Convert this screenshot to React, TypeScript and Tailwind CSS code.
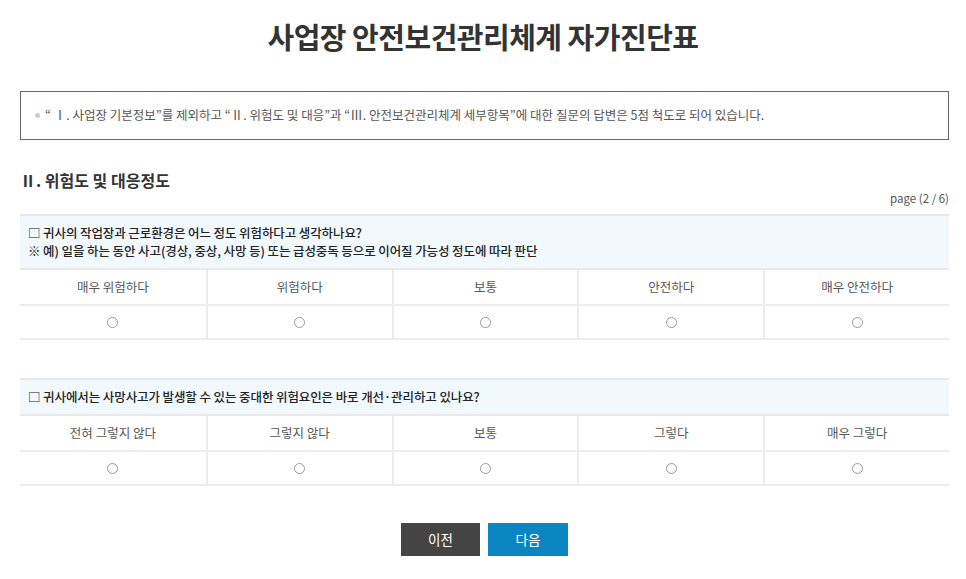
import React from "react";

const font = { fontFamily: '"Noto Sans CJK KR", "Noto Sans", sans-serif' };

type Question = {
  lines: string[];
  options: string[];
};

const questions: Question[] = [
  {
    lines: [
      "□ 귀사의 작업장과 근로환경은 어느 정도 위험하다고 생각하나요?",
      "※ 예) 일을 하는 동안 사고(경상, 중상, 사망 등) 또는 급성중독 등으로 이어질 가능성 정도에 따라 판단",
    ],
    options: ["매우 위험하다", "위험하다", "보통", "안전하다", "매우 안전하다"],
  },
  {
    lines: ["□ 귀사에서는 사망사고가 발생할 수 있는 중대한 위험요인은 바로 개선·관리하고 있나요?"],
    options: ["전혀 그렇지 않다", "그렇지 않다", "보통", "그렇다", "매우 그렇다"],
  },
];

function QuestionBlock({ q }: { q: Question }) {
  return (
    <div>
      {/* 질문 박스 */}
      <div className="bg-[#f1f8fe] border-t-2 border-b-2 border-[#e8e8e8] pl-[8px] py-[8px] text-[12.5px] leading-[18px] font-medium text-[#222]">
        {q.lines.map((l) => (
          <div key={l} className="tracking-[-0.1px]">{l}</div>
        ))}
      </div>
      {/* 선택지 */}
      <div className="grid grid-cols-5">
        {q.options.map((o, i) => (
          <div
            key={o}
            className={`h-[36px] flex items-center justify-center text-[12.5px] text-[#555] border-b-2 border-[#ececec] ${
              i > 0 ? "border-l-2" : ""
            }`}
          >
            {o}
          </div>
        ))}
        {q.options.map((o, i) => (
          <div
            key={o + "-r"}
            className={`h-[34px] flex items-center justify-center border-b-2 border-[#ececec] ${
              i > 0 ? "border-l-2" : ""
            }`}
          >
            <span className="w-[11px] h-[11px] rounded-full border border-[#9a9a9a] bg-white" />
          </div>
        ))}
      </div>
    </div>
  );
}

export default function App() {
  return (
    <div className="bg-white w-[966px] h-[579px] overflow-hidden" style={font}>
      <h1 className="text-center text-[29px] font-bold text-[#333] pt-[16px] leading-[40px] tracking-[-0.5px]">
        사업장 안전보건관리체계 자가진단표
      </h1>

      <div className="ml-[20px] w-[929px]">
        {/* 안내 박스 */}
        <div className="mt-[35px] h-[49px] border border-[#666] flex items-center pl-[14px] text-[12.5px] text-[#555]">
          <span className="w-[5px] h-[5px] rounded-full bg-[#ccc] mr-[5px]" />
          <span>
            “ Ⅰ. 사업장 기본정보”를 제외하고 “Ⅱ. 위험도 및 대응”과 “Ⅲ. 안전보건관리체계 세부항목”에 대한 질문의 답변은 5점 척도로 되어 있습니다.
          </span>
        </div>

        <h2 className="mt-[28px] text-[16px] font-bold text-[#333] leading-[24px]">
          Ⅱ. 위험도 및 대응정도
        </h2>
        <div className="text-right text-[11.5px] text-[#555] leading-[16px] -mt-[2px]">page (2 / 6)</div>

        <div className="mt-[8px]">
          <QuestionBlock q={questions[0]} />
        </div>
        <div className="mt-[38px]">
          <QuestionBlock q={questions[1]} />
        </div>

        <div className="mt-[37px] flex justify-center gap-[8px]">
          <button className="w-[79px] h-[33px] bg-[#444] text-white text-[13.5px]">이전</button>
          <button className="w-[80px] h-[33px] bg-[#0b86c2] text-white text-[13.5px]">다음</button>
        </div>
      </div>
    </div>
  );
}
